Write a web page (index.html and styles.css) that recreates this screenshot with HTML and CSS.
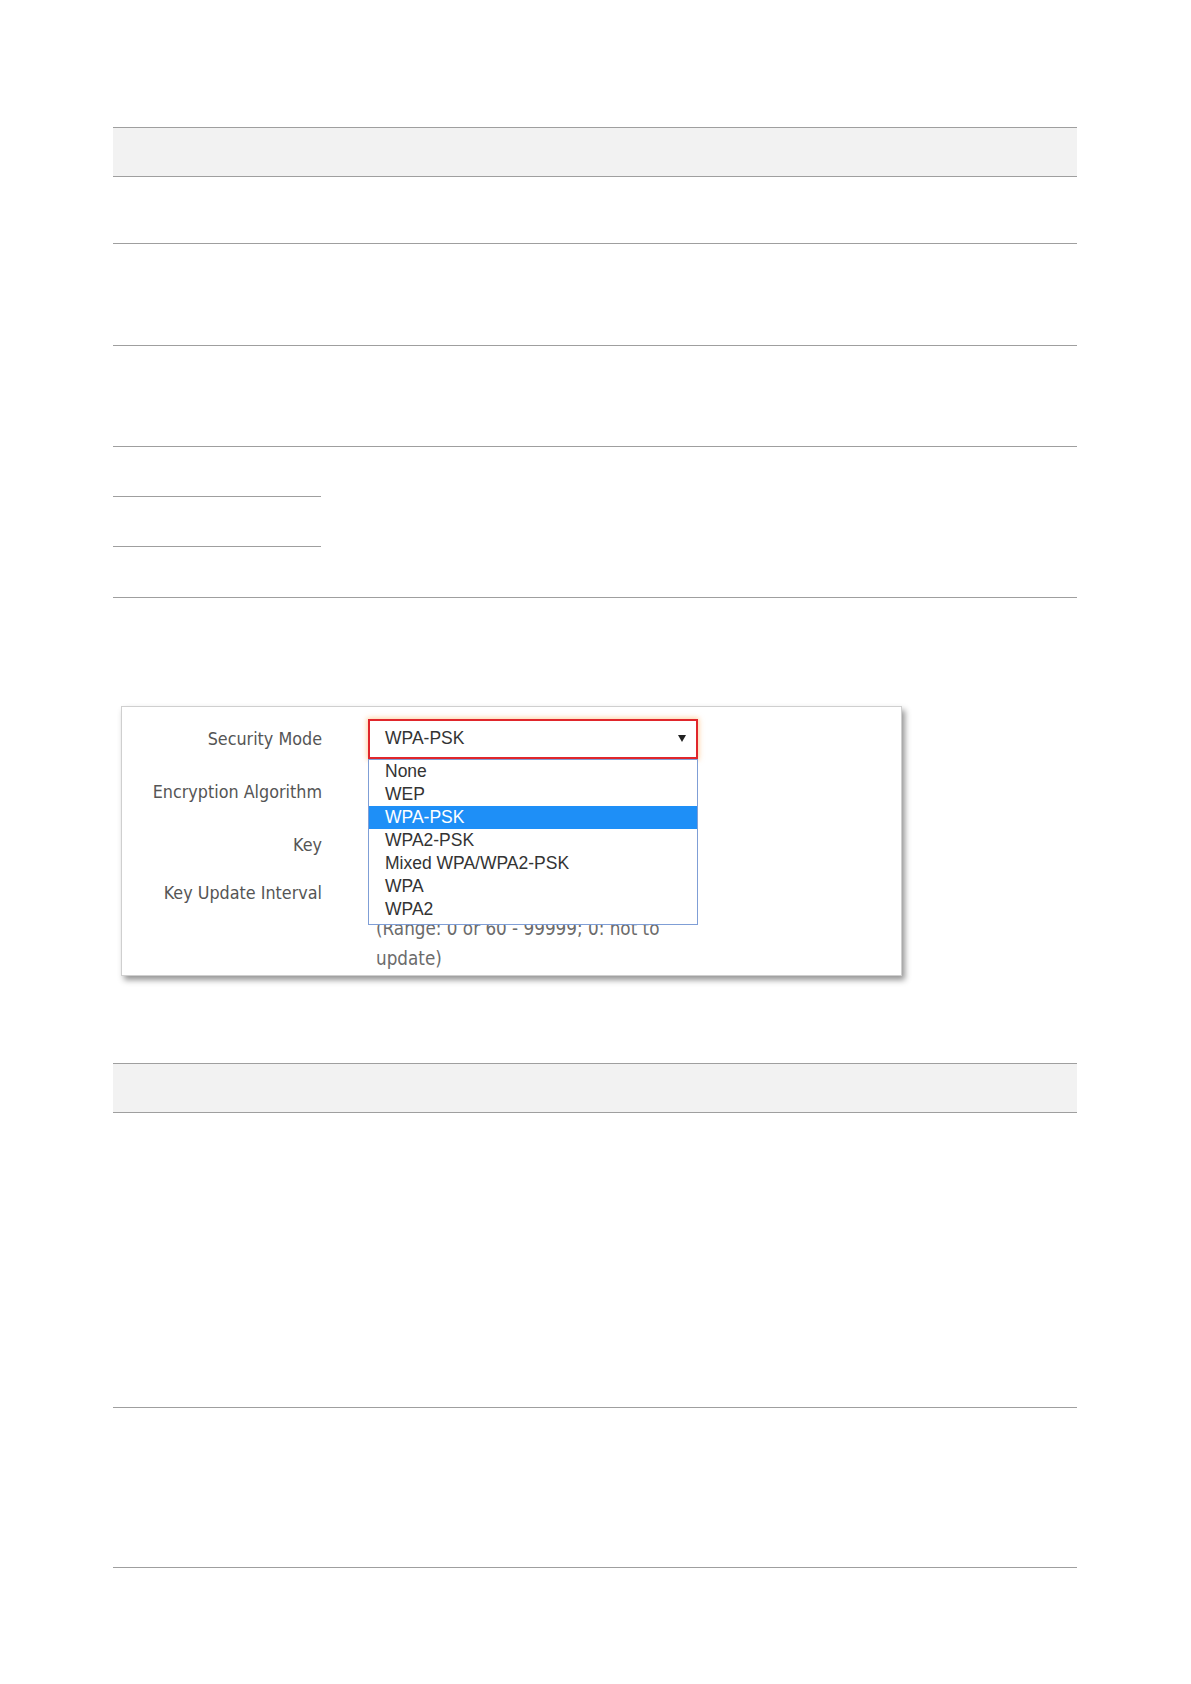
FILE: index.html
```html
<!DOCTYPE html>
<html lang="en">
<head>
<meta charset="utf-8">
<title>Security Mode</title>
<link rel="stylesheet" href="styles.css">
</head>
<body>
<div class="page">
  <div class="table t1">
    <div class="thead"></div>
    <div class="row r1"></div>
    <div class="row r2"></div>
    <div class="row r3"></div>
    <div class="row r4">
      <div class="subcol">
        <div class="sub"></div>
        <div class="sub"></div>
        <div class="sub last"></div>
      </div>
    </div>
  </div>

  <div class="shot">
    <div class="form">
      <div class="label l1">Security Mode</div>
      <div class="ctl c1">
        <div class="select">
          <span class="sel-text">WPA-PSK</span>
          <svg class="arrow" width="8" height="7" viewBox="0 0 8 7"><polygon points="0,0 8,0 4,7" fill="#222"/></svg>
        </div>
      </div>
      <div class="label l2">Encryption Algorithm</div>
      <div class="ctl c2"><div class="field"></div></div>
      <div class="label l3">Key</div>
      <div class="ctl c3"><div class="field"></div></div>
      <div class="label l4">Key Update Interval</div>
      <div class="ctl c4"><div class="field"></div></div>
      <div class="help">(Range: 0 or 60 - 99999; 0: not to<br>update)</div>
    </div>
    <ul class="dropdown">
      <li>None</li>
      <li>WEP</li>
      <li class="active">WPA-PSK</li>
      <li>WPA2-PSK</li>
      <li>Mixed WPA/WPA2-PSK</li>
      <li>WPA</li>
      <li>WPA2</li>
    </ul>
  </div>

  <div class="table t2">
    <div class="thead"></div>
    <div class="row s1"></div>
    <div class="row s2"></div>
  </div>
</div>
</body>
</html>
```

FILE: styles.css
```css
html, body {
  margin: 0;
  padding: 0;
  background: #ffffff;
}

.page {
  padding: 127px 0 0 113px;
  width: 964px;
}

/* document tables */
.table {
  width: 964px;
  border-top: 1px solid #9f9f9f;
}
.thead {
  height: 48px;
  background: #f2f2f2;
  border-bottom: 1px solid #9f9f9f;
}
.row {
  border-bottom: 1px solid #9f9f9f;
}
.r1 { height: 66px; }
.r2 { height: 101px; }
.r3 { height: 100px; }
.r4 { display: flex; }
.subcol {
  width: 208px;
  display: flex;
  flex-direction: column;
}
.sub {
  height: 49px;
  border-bottom: 1px solid #9f9f9f;
}
.sub.last {
  height: 50px;
  border-bottom: none;
}

.t2 { margin-top: 87px; }
.s1 { height: 294px; }
.s2 { height: 159px; }

/* screenshot box */
.shot {
  position: relative;
  margin: 108px 0 0 8px;
  width: 779px;
  padding: 5px 0 1px 0;
  border: 1px solid #cfcfcf;
  box-shadow: 3px 4px 6px rgba(0, 0, 0, 0.42);
  background: #fff;
}

.form {
  display: grid;
  grid-template-columns: 200px 330px;
  grid-template-rows: 53px 53px 53px 43px auto;
  column-gap: 46px;
  align-items: center;
}

.label {
  text-align: right;
  font-family: "DejaVu Sans Condensed", "DejaVu Sans", sans-serif;
  font-stretch: semi-condensed;
  font-size: 17.8px;
  color: #555555;
}

.ctl {
  display: flex;
  align-items: center;
}

.select {
  box-sizing: border-box;
  width: 330px;
  height: 40px;
  border: 2px solid #e0262b;
  box-shadow: 0 0 5px 1px rgba(255, 170, 80, 0.55);
  display: flex;
  align-items: center;
  justify-content: space-between;
  padding: 0 10px 0 15px;
  font-family: "Liberation Sans", Arial, sans-serif;
  font-size: 17.5px;
  color: #333;
}

.field {
  box-sizing: border-box;
  width: 330px;
  height: 34px;
  border: 1px solid #ccc;
}

.help {
  grid-column: 2;
  padding-left: 8px;
  font-family: "DejaVu Sans Condensed", "DejaVu Sans", sans-serif;
  font-stretch: semi-condensed;
  font-size: 18.7px;
  line-height: 30px;
  color: #6b6b6b;
}

/* open options list overlays the form */
.dropdown {
  position: absolute;
  left: 246px;
  top: 52px;
  width: 328px;
  margin: 0;
  padding: 0 0 3px 0;
  list-style: none;
  background: #fff;
  border: 1px solid #7f9ed6;
  font-family: "Liberation Sans", Arial, sans-serif;
  font-size: 17.5px;
  color: #333;
}
.dropdown li {
  height: 23px;
  line-height: 23px;
  padding-left: 16px;
}
.dropdown li.active {
  background: #1e8ff7;
  color: #fff;
}
```
